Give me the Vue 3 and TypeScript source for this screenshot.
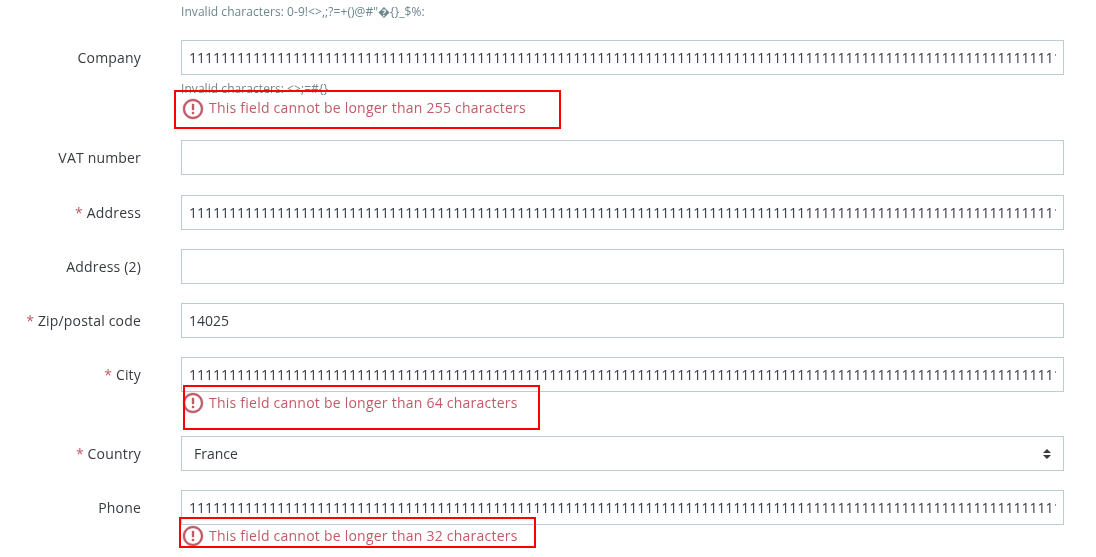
<script setup lang="ts">
interface Field {
  label: string
  required?: boolean
  value?: string
  select?: boolean
  hint?: string
  error?: string
}

const ones = '1'.repeat(130)

const fields: Field[] = [
  { label: 'Company', value: ones, hint: 'Invalid characters: <>;=#{}', error: 'This field cannot be longer than 255 characters' },
  { label: 'VAT number', value: '' },
  { label: 'Address', required: true, value: ones },
  { label: 'Address (2)', value: '' },
  { label: 'Zip/postal code', required: true, value: '14025' },
  { label: 'City', required: true, value: ones, error: 'This field cannot be longer than 64 characters' },
  { label: 'Country', required: true, select: true, value: 'France' },
  { label: 'Phone', value: ones, error: 'This field cannot be longer than 32 characters' },
]
</script>

<template>
  <form class="form" @submit.prevent>
    <div class="row row--top">
      <span></span>
      <div class="hint hint--top">Invalid characters: 0-9!&lt;&gt;,;?=+()@#"�{}_$%:</div>
    </div>

    <div v-for="field in fields" :key="field.label" class="row">
      <label class="label"><span v-if="field.required" class="star">*</span> {{ field.label }}</label>
      <div class="field">
        <div v-if="field.select" class="select-wrap">
          <select class="control control--select">
            <option>{{ field.value }}</option>
          </select>
          <svg class="caret" width="8" height="12" viewBox="0 0 8 12">
            <path d="M4 1 8 5H0zM0 7h8l-4 4z" fill="#363a41" />
          </svg>
        </div>
        <input v-else class="control" type="text" :value="field.value" />
        <div v-if="field.hint" class="hint hint--field">{{ field.hint }}</div>
        <div v-if="field.error" class="error">
          <svg class="error-icon" width="24" height="24" viewBox="0 0 24 24">
            <path
              d="M11 15h2v2h-2zm0-8h2v6h-2zm.99-5C6.47 2 2 6.48 2 12s4.47 10 9.99 10C17.52 22 22 17.52 22 12S17.52 2 11.99 2zM12 20c-4.42 0-8-3.58-8-8s3.58-8 8-8 8 3.58 8 8-3.58 8-8 8z"
              fill="currentColor"
              stroke="currentColor"
              stroke-width="0.4"
            />
          </svg>
          <span class="error-text">{{ field.error }}</span>
        </div>
      </div>
    </div>

    <div class="mark mark--company"></div>
    <div class="mark mark--city"></div>
    <div class="mark mark--phone"></div>
  </form>
</template>

<style>
html,
body {
  background: #fff;
}
</style>

<style scoped>
.form {
  position: relative;
  padding: 3px 32px 0 0;
  font-family: "Open Sans", "Noto Sans", sans-serif;
  font-size: 14px;
  color: #363a41;
  will-change: transform;
}

.row {
  display: grid;
  grid-template-columns: 141px 1fr;
  column-gap: 40px;
  margin-bottom: 19.2px;
}

.row:last-of-type {
  margin-bottom: 0;
}

.row--top {
  margin-bottom: 20px;
}

.label {
  height: 35px;
  line-height: 35px;
  text-align: right;
  white-space: nowrap;
  letter-spacing: 0.18px;
}

.star {
  color: #c05c67;
}

.field {
  min-width: 0;
}

.control {
  display: block;
  width: 100%;
  height: 35px;
  box-sizing: border-box;
  padding: 0 7px;
  border: 1px solid #bbcdd2;
  border-radius: 0;
  outline: none;
  background: #fff;
  font: inherit;
  color: inherit;
}

.select-wrap {
  position: relative;
}

.control--select {
  padding: 0 12px;
  appearance: none;
}

.caret {
  position: absolute;
  top: 12px;
  right: 13px;
}

.hint {
  font-size: 12px;
  line-height: 17px;
  color: #6c868e;
  letter-spacing: 0.06px;
}

.hint--field {
  margin-top: 4.6px;
  margin-bottom: 1px;
}

.error {
  display: flex;
  align-items: center;
  gap: 4px;
  height: 24px;
  margin-top: -1px;
  padding-bottom: 1.6px;
  color: #c05c67;
  white-space: nowrap;
}

.hint--field + .error {
  padding-bottom: 0.6px;
}

.error-icon {
  flex: none;
}

.error-text {
  padding-bottom: 2px;
  letter-spacing: 0.235px;
}

.mark {
  position: absolute;
  box-sizing: border-box;
  border: 2px solid #f00;
  pointer-events: none;
}

.mark--company {
  left: 174px;
  top: 90px;
  width: 387px;
  height: 39px;
}

.mark--city {
  left: 183px;
  top: 385px;
  width: 357px;
  height: 45px;
}

.mark--phone {
  left: 179px;
  top: 517px;
  width: 357px;
  height: 31px;
}
</style>
